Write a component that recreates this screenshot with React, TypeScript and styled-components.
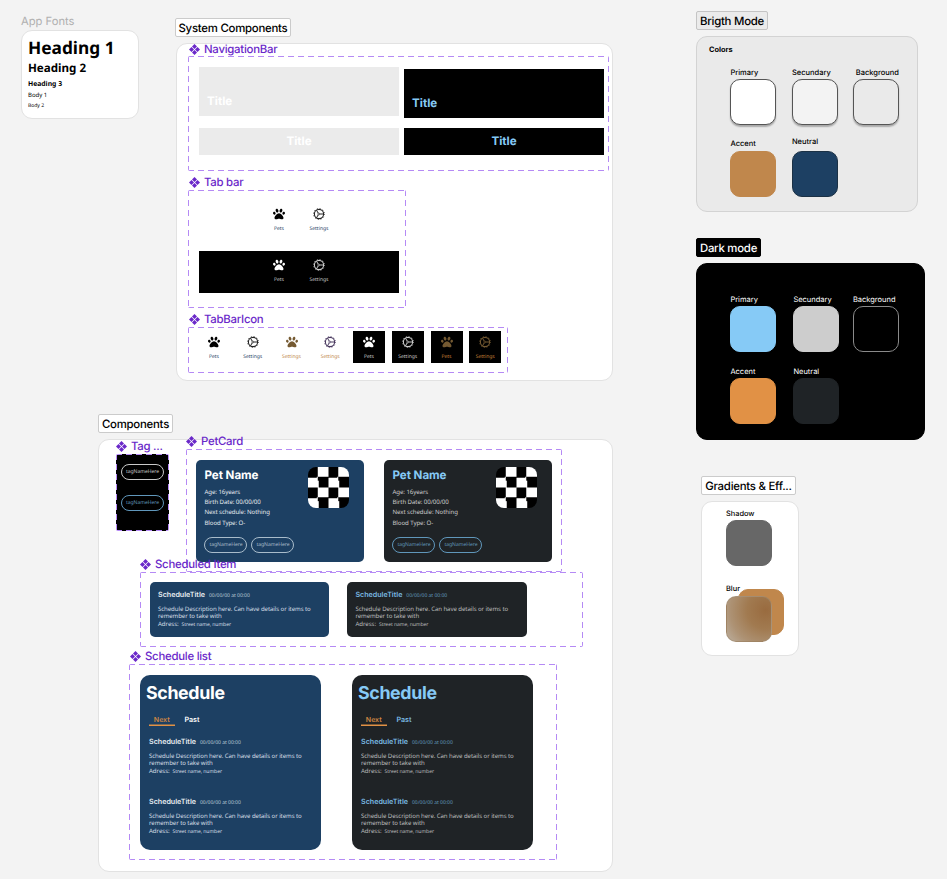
import React from "react";
import styled, { createGlobalStyle, css } from "styled-components";
import { FaPaw } from "react-icons/fa";

const inter = 'Inter, "Liberation Sans", sans-serif';
const noto = '"Noto Sans", "Open Sans", sans-serif';

const colors = {
  purple: "#6a28c9",
  dash: "#b58af5",
  navy: "#1d4063",
  ink: "#1f2326",
  sky: "#86caf6",
  accent: "#c0874c",
  orange: "#e19145",
  paper: "#ebebeb",
};

const GlobalStyle = createGlobalStyle`
  * { box-sizing: border-box; }
  body { margin: 0; background: #f3f3f3; text-rendering: geometricPrecision; }
`;

const Canvas = styled.main`
  position: relative;
  width: 947px;
  height: 879px;
  overflow: hidden;
  background: #f3f3f3;
  font-family: ${inter};
`;

type Box = { $x: number; $y: number; $w?: number; $h?: number };

/* Anything dropped on the free canvas keeps its own coordinates. */
const placed = css<Box>`
  position: absolute;
  left: ${(p) => p.$x}px;
  top: ${(p) => p.$y}px;
  ${(p) => p.$w !== undefined && `width: ${p.$w}px;`}
  ${(p) => p.$h !== undefined && `height: ${p.$h}px;`}
`;

const Section = styled.section<Box & { $bg?: string; $line?: string; $pad?: string }>`
  ${placed}
  background: ${(p) => p.$bg ?? "#fff"};
  border: 1px solid ${(p) => p.$line ?? "#e2e2e2"};
  border-radius: 11px;
  padding: ${(p) => p.$pad ?? "0"};
`;

const SectionLabel = styled.div<Box & { $bg?: string; $color?: string; $line?: string }>`
  ${placed}
  display: flex;
  align-items: center;
  justify-content: center;
  white-space: nowrap;
  border-radius: 2px;
  border: 1px solid ${(p) => p.$line ?? "#cbcbcb"};
  background: ${(p) => p.$bg ?? "#fff"};
  color: ${(p) => p.$color ?? "#000"};
  font-size: 11.4px;
  font-weight: 450;
  letter-spacing: -0.25px;
`;

const PlainLabel = styled.div<Box>`
  ${placed}
  color: #b0b0b0;
  font-size: 11.2px;
  line-height: 14px;
`;

const dashH = `repeating-linear-gradient(90deg, ${colors.dash} 0 6px, transparent 6px 10px)`;
const dashV = `repeating-linear-gradient(180deg, ${colors.dash} 0 6px, transparent 6px 10px)`;

const ComponentSet = styled.div<Box & { $pad?: string; $bg?: string }>`
  ${placed}
  padding: ${(p) => p.$pad ?? "0"};
  border-radius: 2px;
  background-color: ${(p) => p.$bg ?? "transparent"};
  background-image: ${dashH}, ${dashH}, ${dashV}, ${dashV};
  background-size: 100% 1px, 100% 1px, 1px 100%, 1px 100%;
  background-position: 0 0, 0 100%, 0 0, 100% 0;
  background-repeat: no-repeat;
`;

const SetLabel = styled.div<Box>`
  ${placed}
  display: flex;
  align-items: center;
  gap: 4px;
  height: 14px;
  color: ${colors.purple};
  font-size: 11.4px;
  font-weight: 450;
  letter-spacing: -0.26px;
  white-space: nowrap;
`;

const Txt = styled.span<{
  $size: number;
  $w?: number;
  $c?: string;
  $ls?: number;
  $lh?: number;
  $noto?: boolean;
  $mt?: number;
}>`
  display: block;
  white-space: pre;
  font-family: ${(p) => (p.$noto ? noto : inter)};
  font-size: ${(p) => p.$size}px;
  font-weight: ${(p) => p.$w ?? 400};
  color: ${(p) => p.$c ?? "#000"};
  letter-spacing: ${(p) => p.$ls ?? 0}px;
  line-height: ${(p) => p.$lh ?? 10}px;
  margin-top: ${(p) => p.$mt ?? 0}px;
`;

const FontStack = styled.div`
  display: flex;
  flex-direction: column;
`;

const ComponentGlyph = () => (
  <svg width="11" height="11" viewBox="0 0 11 11" fill={colors.purple}>
    <path d="M5.5 0 8 2.5 5.5 5 3 2.5Z" />
    <path d="M5.5 6 8 8.5 5.5 11 3 8.5Z" />
    <path d="M2.5 3 5 5.5 2.5 8 0 5.5Z" />
    <path d="M8.5 3 11 5.5 8.5 8 6 5.5Z" />
  </svg>
);

const SetTitle = ({ x, y, children }: { x: number; y: number; children: string }) => (
  <SetLabel $x={x} $y={y}>
    <ComponentGlyph />
    {children}
  </SetLabel>
);

/* Navigation bars */

const NavColumns = styled.div`
  display: flex;
  gap: 5px;
`;

const NavColumn = styled.div<{ $top: number }>`
  display: flex;
  flex-direction: column;
  gap: ${(p) => 12 - p.$top}px;
  padding-top: ${(p) => p.$top}px;
`;

const NavBar = styled.div<{ $dark?: boolean; $compact?: boolean }>`
  display: flex;
  width: 200px;
  height: ${(p) => (p.$compact ? 26.5 : 49)}px;
  align-items: ${(p) => (p.$compact ? "center" : "flex-end")};
  justify-content: ${(p) => (p.$compact ? "center" : "flex-start")};
  padding: ${(p) => (p.$compact ? "0" : "0 8px 8px")};
  background: ${(p) => (p.$dark ? "#000" : colors.paper)};
`;

const NavTitle = ({ dark }: { dark?: boolean }) => (
  <Txt $size={11.6} $w={650} $lh={14} $c={dark ? colors.sky : "#fff"}>
    Title
  </Txt>
);

/* Tab bar */

const TabStrip = styled.div<{ $dark?: boolean }>`
  display: flex;
  justify-content: center;
  gap: 8px;
  width: 200px;
  height: 42px;
  margin-bottom: 9px;
  padding-top: 3px;
  background: ${(p) => (p.$dark ? "#000" : "transparent")};
`;

const TabTile = styled.div<{ $bg?: string }>`
  display: flex;
  flex-direction: column;
  align-items: center;
  gap: 4.5px;
  width: 32px;
  height: 32px;
  padding-top: 5px;
  background: ${(p) => p.$bg ?? "transparent"};
`;

const TileRow = styled.div`
  display: flex;
  gap: 6.75px;
`;

const Gear = ({ color }: { color: string }) => (
  <svg width="12" height="12" viewBox="0 0 24 24" fill="none" stroke={color}>
    <circle cx="12" cy="12" r="9.2" strokeWidth="2.2" />
    <circle cx="12" cy="12" r="11" strokeWidth="1.6" strokeDasharray="2.1 3.66" />
    <circle cx="11.4" cy="12" r="1.9" strokeWidth="1.5" />
    <path d="M13.8 12H21M10.4 10.2 7 4.4M10.4 13.8 7 19.6" strokeWidth="2" />
  </svg>
);

type Tab = { icon: "paw" | "gear"; label: string; iconColor: string; color: string; bg?: string };

const TabIcon = ({ icon, label, iconColor, color, bg }: Tab) => (
  <TabTile $bg={bg}>
    {icon === "paw" ? <FaPaw size={12} color={iconColor} /> : <Gear color={iconColor} />}
    <Txt $noto $size={5} $lh={8} $c={color}>
      {label}
    </Txt>
  </TabTile>
);

const tabs: Tab[] = [
  { icon: "paw", label: "Pets", iconColor: "#000", color: colors.navy },
  { icon: "gear", label: "Settings", iconColor: "#222", color: colors.navy },
  { icon: "paw", label: "Settings", iconColor: "#755a32", color: colors.accent },
  { icon: "gear", label: "Settings", iconColor: "#49395f", color: colors.accent },
  { icon: "paw", label: "Pets", iconColor: "#fff", color: "#ccc", bg: "#000" },
  { icon: "gear", label: "Settings", iconColor: "#ccc", color: "#ccc", bg: "#000" },
  { icon: "paw", label: "Pets", iconColor: "#755a32", color: "#c98037", bg: "#000" },
  { icon: "gear", label: "Settings", iconColor: "#755a32", color: "#c98037", bg: "#000" },
];

/* Colour swatches */

const SwatchGrid = styled.div<{ $cols: string; $gap: number; $inset?: string }>`
  display: grid;
  grid-template-columns: ${(p) => p.$cols};
  row-gap: ${(p) => p.$gap}px;
  padding: ${(p) => p.$inset ?? "0"};
`;

const SwatchCell = styled.div<{ $end?: boolean; $lift?: number }>`
  display: flex;
  flex-direction: column;
  width: 46px;
  height: 58px;
  justify-content: flex-end;
  align-items: ${(p) => (p.$end ? "flex-end" : "flex-start")};
  gap: ${(p) => p.$lift ?? 1.5}px;
`;

const Chip = styled.div<{ $fill: string; $line?: string; $shadow?: boolean }>`
  width: 46px;
  height: 46px;
  flex: none;
  border-radius: 10px;
  border: 1px solid ${(p) => p.$line ?? p.$fill};
  background: ${(p) => p.$fill};
  box-shadow: ${(p) => (p.$shadow ? "0 1.5px 1.5px rgba(0,0,0,.28)" : "none")};
`;

const Stage = styled.div`
  position: relative;
  width: 60px;
  height: 54px;
  margin-top: -5px;
`;

const StageChip = styled(Chip)<{ $l: number; $t: number; $glass?: boolean }>`
  position: absolute;
  left: ${(p) => p.$l}px;
  top: ${(p) => p.$t}px;
  ${(p) =>
    p.$glass &&
    css`
      border-color: rgba(160, 140, 115, 0.6);
      background: radial-gradient(circle at 88% 30%, #996b3f 0%, #a17a50 38%, #ad9274 72%, #bcae9d 100%);
    `}
`;

type SwatchSpec = { name: string; fill: string; line?: string; shadow?: boolean; end?: boolean; lift?: number };

const Swatch = ({ s, color }: { s: SwatchSpec; color: string }) => (
  <SwatchCell $end={s.end} $lift={s.lift}>
    <Txt $size={7.5} $w={color === "#000" ? 500 : 400} $c={color}>
      {s.name}
    </Txt>
    <Chip $fill={s.fill} $line={s.line} $shadow={s.shadow} />
  </SwatchCell>
);

const bright: SwatchSpec[] = [
  { name: "Primary", fill: "#fff", line: "#555", shadow: true },
  { name: "Secundary", fill: "#f3f3f3", line: "#555", shadow: true },
  { name: "Background", fill: "#eaeaea", line: "#555", shadow: true, end: true },
  { name: "Accent", fill: colors.accent, lift: 2 },
  { name: "Neutral", fill: colors.navy, line: "#1b3145", lift: 4.5 },
];

const dark: SwatchSpec[] = [
  { name: "Primary", fill: colors.sky },
  { name: "Secundary", fill: "#cdcdcd" },
  { name: "Background", fill: "#000", line: "#8a8a8a" },
  { name: "Accent", fill: colors.orange },
  { name: "Neutral", fill: colors.ink },
];

/* Pet components */

const TagPill = styled.span<{ $c: string }>`
  display: flex;
  align-items: center;
  justify-content: center;
  width: 43px;
  height: 16px;
  border: 1px solid ${(p) => p.$c};
  border-radius: 8px;
  color: ${(p) => p.$c};
  font: 400 5.1px ${noto};
  letter-spacing: -0.05px;
`;

const TagStack = styled.div`
  display: flex;
  flex-direction: column;
  gap: 14.5px;
`;

const CardRow = styled.div<{ $gap: number }>`
  display: flex;
  gap: ${(p) => p.$gap}px;
`;

const Card = styled.article<{ $w: number; $h: number; $dark?: boolean; $r: number; $pad: string }>`
  width: ${(p) => p.$w}px;
  height: ${(p) => p.$h}px;
  padding: ${(p) => p.$pad};
  border-radius: ${(p) => p.$r}px;
  background: ${(p) => (p.$dark ? colors.ink : colors.navy)};
`;

const PetTop = styled.div`
  display: flex;
  justify-content: space-between;
  height: 70px;
`;

const Checker = styled.div`
  width: 41px;
  height: 41px;
  border-radius: 8px;
  background: conic-gradient(#fff 25%, #000 0 50%, #fff 0 75%, #000 0) 0 0 / 20.5px 20.5px;
`;

const TagRow = styled.div`
  display: flex;
  gap: 4px;
`;

const petLines = ["Age: 16years", "Birth Date: 00/00/00", "Next schedule: Nothing", "Blood Type: O-"];

const PetCard = ({ dark: isDark }: { dark?: boolean }) => {
  const body = isDark ? "#c9c9c9" : "#e3e9ee";
  const tag = isDark ? "#6097bb" : "#a9bccb";
  return (
    <Card $w={167.5} $h={102} $dark={isDark} $r={5} $pad="7.6px 15px 0 8.3px">
      <PetTop>
        <div>
          <Txt $size={11.6} $w={650} $lh={16} $ls={-0.05} $c={isDark ? colors.sky : "#fff"}>
            Pet Name
          </Txt>
          <Txt $noto $size={6.1} $lh={10.35} $ls={-0.08} $mt={3.7} $c={body}>
            {petLines.join("\n")}
          </Txt>
        </div>
        <Checker />
      </PetTop>
      <TagRow>
        <TagPill $c={tag}>tagNameHere</TagPill>
        <TagPill $c={tag}>tagNameHere</TagPill>
      </TagRow>
    </Card>
  );
};

const Inline = styled.div<{ $gap: number }>`
  display: flex;
  align-items: baseline;
  gap: ${(p) => p.$gap}px;
`;

const ScheduleItem = ({ dark: isDark }: { dark?: boolean }) => {
  const title = isDark ? "#7bbbe4" : "#e9eef2";
  const date = isDark ? "#6299bd" : "#bccbd7";
  const body = isDark ? "#b9babb" : "#d2dce4";
  return (
    <div>
      <Inline $gap={4}>
        <Txt $size={7.15} $w={600} $c={title}>
          ScheduleTitle
        </Txt>
        <Txt $noto $size={5} $c={date}>
          00/00/00 at 00:00
        </Txt>
      </Inline>
      <Txt $noto $size={6.1} $lh={7.2} $ls={-0.09} $mt={4.2} $c={body}>
        {"Schedule Description here. Can have details or items to\nremember to take with"}
      </Txt>
      <Inline $gap={3}>
        <Txt $noto $size={6.1} $ls={-0.05} $c={body}>
          Adress:
        </Txt>
        <Txt $noto $size={5.1} $ls={-0.09} $c={body}>
          Street name, number
        </Txt>
      </Inline>
    </div>
  );
};

const TabHeads = styled.div`
  display: flex;
  gap: 9.5px;
  height: 12px;
  margin: 10px 0 10.3px;
`;

const TabHead = styled.div<{ $active?: boolean }>`
  width: 26.5px;
  height: 11.5px;
  margin-left: ${(p) => (p.$active ? 2.5 : 0)}px;
  display: flex;
  justify-content: ${(p) => (p.$active ? "center" : "flex-start")};
  box-shadow: ${(p) => (p.$active ? `inset 0 -1.5px ${colors.orange}` : "none")};
`;

const ItemStack = styled.div`
  display: grid;
  grid-auto-rows: 60px;
  padding-left: 3px;
`;

const ScheduleCard = ({ dark: isDark }: { dark?: boolean }) => (
  <Card $w={181} $h={175} $dark={isDark} $r={10} $pad="7px 6px 0">
    <Txt $size={17.8} $w={650} $lh={23} $ls={-0.35} $c={isDark ? colors.sky : "#fff"}>
      Schedule
    </Txt>
    <TabHeads>
      <TabHead $active>
        <Txt $size={7} $w={600} $c="#cf8744">
          Next
        </Txt>
      </TabHead>
      <TabHead>
        <Txt $size={7.1} $w={600} $c={isDark ? "#7bbbe4" : "#fff"}>
          Past
        </Txt>
      </TabHead>
    </TabHeads>
    <ItemStack>
      <ScheduleItem dark={isDark} />
      <ScheduleItem dark={isDark} />
    </ItemStack>
  </Card>
);

export default function App() {
  return (
    <>
      <GlobalStyle />
      <Canvas>
        <PlainLabel $x={21} $y={14}>
          App Fonts
        </PlainLabel>
        <Section $x={21} $y={30} $w={118} $h={88.5} $pad="5.5px 6px">
          <FontStack>
            <Txt $noto $size={17.3} $w={700} $lh={23}>Heading 1</Txt>
            <Txt $noto $size={11.6} $w={700} $lh={18} $mt={0.6}>Heading 2</Txt>
            <Txt $noto $size={6.8} $w={700} $lh={12}>Heading 3</Txt>
            <Txt $noto $size={6} $lh={11}>Body 1</Txt>
            <Txt $noto $size={5} $lh={10}>Body 2</Txt>
          </FontStack>
        </Section>

        <SectionLabel $x={175} $y={18} $w={116} $h={19}>System Components</SectionLabel>
        <Section $x={176} $y={43} $w={437} $h={338} />

        <SetTitle x={189} y={42}>NavigationBar</SetTitle>
        <ComponentSet $x={188} $y={56} $w={421} $h={115} $pad="11px 0 0 11px">
          <NavColumns>
            <NavColumn $top={0}>
              <NavBar><NavTitle /></NavBar>
              <NavBar $compact><NavTitle /></NavBar>
            </NavColumn>
            <NavColumn $top={2}>
              <NavBar $dark><NavTitle dark /></NavBar>
              <NavBar $dark $compact><NavTitle dark /></NavBar>
            </NavColumn>
          </NavColumns>
        </ComponentSet>

        <SetTitle x={189} y={175}>Tab bar</SetTitle>
        <ComponentSet $x={188} $y={190} $w={218} $h={118} $pad="10px 0 0 11px">
          <TabStrip>
            <TabIcon {...tabs[0]} />
            <TabIcon {...tabs[1]} />
          </TabStrip>
          <TabStrip $dark>
            <TabIcon {...tabs[4]} />
            <TabIcon {...tabs[5]} />
          </TabStrip>
        </ComponentSet>

        <SetTitle x={189} y={312}>TabBarIcon</SetTitle>
        <ComponentSet $x={188} $y={327} $w={320} $h={46} $pad="4px 0 0 10px">
          <TileRow>
            {tabs.map((t, i) => (
              <TabIcon key={i} {...t} />
            ))}
          </TileRow>
        </ComponentSet>

        <SectionLabel $x={696} $y={11} $w={72} $h={19} $bg="#ebebeb" $line="#c4c4c4">Brigth Mode</SectionLabel>
        <Section $x={696} $y={36} $w={222} $h={176} $bg="#eaeaea" $line="#d3d3d3" $pad="8px 0 0 12px">
          <Txt $size={7.4} $w={700}>Colors</Txt>
          <SwatchGrid $cols="61.5px 61px 46px" $gap={14} $inset="12px 0 0 21.4px">
            {bright.map((s) => (
              <Swatch key={s.name} s={s} color="#000" />
            ))}
          </SwatchGrid>
        </Section>

        <SectionLabel $x={696} $y={238} $w={65} $h={19} $bg="#000" $color="#fff" $line="#000">Dark mode</SectionLabel>
        <Section $x={696} $y={263} $w={229} $h={177} $bg="#000" $line="#000" $pad="30px 0 0 33.4px">
          <SwatchGrid $cols="63px 59.5px 46px" $gap={14}>
            {dark.map((s) => (
              <Swatch key={s.name} s={s} color="#fff" />
            ))}
          </SwatchGrid>
        </Section>

        <SectionLabel $x={701} $y={476} $w={95} $h={19}>Gradients &amp; Eff...</SectionLabel>
        <Section $x={701} $y={501} $w={98} $h={154.5} $pad="6px 0 0 24px">
          <Txt $size={7.4} $w={500} $lh={12}>Shadow</Txt>
          <Chip $fill="#676767" />
          <Txt $size={7.4} $w={500} $mt={18}>Blur</Txt>
          <Stage>
            <StageChip $fill={colors.accent} $l={12.4} $t={-0.5} />
            <StageChip $fill="transparent" $glass $l={0} $t={7} />
          </Stage>
        </Section>

        <SectionLabel $x={98} $y={414} $w={75} $h={19}>Components</SectionLabel>
        <Section $x={98} $y={439} $w={515} $h={433} />

        <SetTitle x={116} y={439}>Tag ...</SetTitle>
        <ComponentSet $x={116} $y={454} $w={53} $h={76.5} $bg="#000" $pad="10px 5px">
          <TagStack>
            <TagPill $c="#c9c9c9">tagNameHere</TagPill>
            <TagPill $c="#6097bb">tagNameHere</TagPill>
          </TagStack>
        </ComponentSet>

        <ComponentSet $x={186} $y={449} $w={376} $h={123} $pad="10.5px 0 0 10.2px">
          <CardRow $gap={20.5}>
            <PetCard />
            <PetCard dark />
          </CardRow>
        </ComponentSet>
        <SetTitle x={186} y={434}>PetCard</SetTitle>

        <ComponentSet $x={140} $y={572} $w={443} $h={75} $pad="10px 0 0 10px">
          <CardRow $gap={18}>
            <Card $w={179.4} $h={55} $r={5} $pad="7.5px 8px"><ScheduleItem /></Card>
            <Card $w={179.4} $h={55} $dark $r={5} $pad="7.5px 8px"><ScheduleItem dark /></Card>
          </CardRow>
        </ComponentSet>
        <SetTitle x={140} y={557}>Scheduled Item</SetTitle>

        <ComponentSet $x={129} $y={664} $w={428} $h={196} $pad="10.5px 0 0 11px">
          <CardRow $gap={31}>
            <ScheduleCard />
            <ScheduleCard dark />
          </CardRow>
        </ComponentSet>
        <SetTitle x={130} y={649}>Schedule list</SetTitle>
      </Canvas>
    </>
  );
}
